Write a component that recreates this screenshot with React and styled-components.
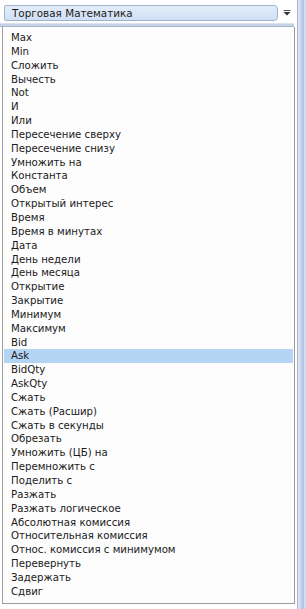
import React from "react";
import styled, { createGlobalStyle } from "styled-components";

const Global = createGlobalStyle`
  html, body { margin: 0; padding: 0; background: #ffffff; }
  body { font-family: "DejaVu Sans", "Liberation Sans", sans-serif; }
`;

const items = [
  "Max", "Min", "Сложить", "Вычесть", "Not", "И", "Или",
  "Пересечение сверху", "Пересечение снизу", "Умножить на", "Константа",
  "Объем", "Открытый интерес", "Время", "Время в минутах", "Дата",
  "День недели", "День месяца", "Открытие", "Закрытие", "Минимум",
  "Максимум", "Bid", "Ask", "BidQty", "AskQty", "Сжать", "Сжать (Расшир)",
  "Сжать в секунды", "Обрезать", "Умножить (ЦБ) на", "Перемножить с",
  "Поделить с", "Разжать", "Разжать логическое", "Абсолютная комиссия",
  "Относительная комиссия", "Относ. комиссия с минимумом", "Перевернуть",
  "Задержать", "Сдвиг",
];

const Page = styled.div`
  display: flex;
  width: 306px;
  height: 609px;
  background: #ffffff;
  overflow: hidden;
`;

const Main = styled.div`
  width: 296px;
  display: flex;
  flex-direction: column;
`;

const RightStrip = styled.div`
  width: 10px;
  background: linear-gradient(
    to right,
    #ffffff 0px, #ffffff 1px,
    #a9b2c8 1px, #a9b2c8 2px,
    #dde5f4 2px, #dde5f4 4px,
    #c4d1ec 4px, #c4d1ec 6px,
    #b7c6e6 6px, #b7c6e6 8px,
    #d3ddf1 8px, #d3ddf1 10px
  );
`;

const Header = styled.div`
  height: 23px;
  display: flex;
  align-items: flex-start;
  padding: 5px 0 0 4px;
  box-sizing: border-box;
`;

const Combo = styled.div`
  width: 274px;
  height: 16px;
  box-sizing: border-box;
  border: 1px solid #9fb3cf;
  border-radius: 2px 4px 4px 2px;
  background: linear-gradient(to bottom, #e3edf9, #cfe0f5);
  font-size: 10.4px;
  line-height: 15px;
  color: #1c1c1c;
  padding-left: 7px;
  white-space: nowrap;
`;

const ArrowBox = styled.div`
  width: 14px;
  height: 16px;
  display: flex;
  align-items: center;
  justify-content: center;
  margin-left: 2px;
`;

const Separator = styled.div`
  height: 4px;
  width: 294px;
  box-sizing: border-box;
  border-top: 1px solid #d9e2ee;
  border-bottom: 1px solid #a8b5c8;
  background: #c6d2e3;
`;

const ListBox = styled.div`
  margin-left: 2px;
  width: 293px;
  height: 577px;
  box-sizing: border-box;
  border: 1px solid #9c9c9c;
  border-top: none;
  background: #fdfdfd;
  padding: 4px 1px 0 1px;
`;

const Row = styled.div`
  height: 13.85px;
  line-height: 14px;
  font-size: 10.2px;
  color: #1a1a1a;
  padding-left: 7px;
  white-space: nowrap;
  background: ${(p) => (p.$selected ? "#b4d4f4" : "transparent")};
`;

export default function App() {
  return (
    <>
      <Global />
      <Page>
        <Main>
          <Header>
            <Combo>Торговая Математика</Combo>
            <ArrowBox>
              <svg width="8" height="6" viewBox="0 0 8 6">
                <rect x="0.5" y="0" width="7" height="1" fill="#555" />
                <path d="M0.5 2 L7.5 2 L4 5.5 Z" fill="#333" />
              </svg>
            </ArrowBox>
          </Header>
          <Separator />
          <ListBox>
            {items.map((t) => (
              <Row key={t} $selected={t === "Ask"}>
                {t}
              </Row>
            ))}
          </ListBox>
        </Main>
        <RightStrip />
      </Page>
    </>
  );
}
